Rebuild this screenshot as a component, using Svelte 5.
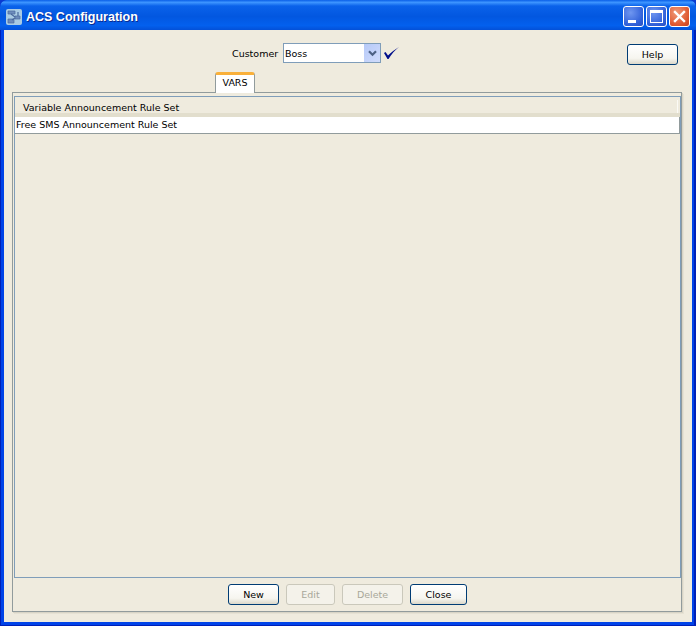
<script>
  const footerButtons = [
    { label: 'New', width: 51, disabled: false },
    { label: 'Edit', width: 49, disabled: true },
    { label: 'Delete', width: 61, disabled: true },
    { label: 'Close', width: 57, disabled: false }
  ];
</script>

<div class="window">
  <header class="titlebar">
    <svg class="appicon" width="16" height="16" viewBox="0 0 16 16">
      <rect x="0" y="0" width="16" height="16" rx="2" fill="#a9cbe4"/>
      <path d="M2 2h7v3H2zM9 7h5v3H9zM2 10h6v4H2z" fill="#6d8cbc" stroke="#4a6a9e" stroke-width="0.7"/>
      <path d="M5 5l4 3M9 9l-3 2M12 3v4" stroke="#4a6a9e" stroke-width="1.2" fill="none"/>
    </svg>
    <span class="title">ACS Configuration</span>
    <div class="wincontrols">
      <span class="wbtn"><i class="min"></i></span>
      <span class="wbtn"><i class="max"></i></span>
      <span class="wbtn close">
        <svg width="13" height="13" viewBox="0 0 13 13"><path d="M2 2l9 9M11 2l-9 9" stroke="#fff" stroke-width="2.4" stroke-linecap="square"/></svg>
      </span>
    </div>
  </header>

  <main class="client">
    <div class="toprow">
      <label class="customer">
        <span class="customerlabel">Customer</span>
        <span class="combo">
          <span class="comboval">Boss</span>
          <span class="comboarrow">
            <svg width="9" height="7" viewBox="0 0 9 7"><path d="M1 1.200l3.500 3.500L8 1.200" fill="none" stroke="#4d6185" stroke-width="2.200"/></svg>
          </span>
        </span>
        <svg class="tick" width="15" height="12" viewBox="0 0 15 12"><path d="M0 6L1.500 5L4 8.500C7 5.500 11 2.500 15 0C11 3 7.500 7 4.500 12H3.500z" fill="#000e8a"/></svg>
      </label>
      <button class="btn help">Help</button>
    </div>

    <div class="tabstrip">
      <div class="tab">VARS</div>
    </div>

    <section class="pane">
      <div class="content">
        <div class="tablehead"><span class="headcell">Variable Announcement Rule Set</span></div>
        <div class="row">Free SMS Announcement Rule Set</div>
      </div>
      <footer class="actions">
        {#each footerButtons as b}
          <button class="btn" disabled={b.disabled} style="width:{b.width}px">{b.label}</button>
        {/each}
      </footer>
    </section>
  </main>
</div>

<style>
  :global(body) {
    margin: 0;
    background: #0a3ad0;
  }
  .window {
    width: 696px;
    height: 626px;
    box-sizing: border-box;
    display: flex;
    flex-direction: column;
    background: #0043e8;
    box-shadow: inset 1px 0 #0020b8, inset -2px 0 #0020b8, inset 0 -1px #0020b8;
    border-radius: 7px 7px 0 0;
    overflow: hidden;
    font-family: "DejaVu Sans", sans-serif;
    font-size: 9.5px;
    color: #000;
  }
  .titlebar {
    height: 30px;
    flex: none;
    display: flex;
    align-items: center;
    padding: 3px 3px 0 6px;
    box-sizing: border-box;
    background: linear-gradient(180deg, #0a5fe8 0%, #3d95ff 8%, #0a62ea 20%, #0257e0 55%, #0360ee 85%, #0350d8 100%);
  }
  .title {
    margin-left: 4px;
    color: #fff;
    font-family: "Liberation Sans", sans-serif;
    font-weight: 700;
    font-size: 12.5px;
    text-shadow: 1px 1px 0 #0a2a90;
  }
  .wincontrols {
    margin-left: auto;
    display: flex;
    gap: 2px;
    padding-right: 3px;
  }
  .wbtn {
    width: 21px;
    height: 21px;
    box-sizing: border-box;
    border: 1px solid #fff;
    border-radius: 3px;
    background: radial-gradient(circle at 35% 30%, #6f96f0, #2f5fd8 70%, #2a50c0);
    position: relative;
    display: flex;
    align-items: center;
    justify-content: center;
  }
  .wbtn.close {
    background: radial-gradient(circle at 35% 30%, #f09a78, #df5a32 65%, #c8401e);
  }
  .min {
    position: absolute;
    left: 4px;
    bottom: 3px;
    width: 8px;
    height: 3px;
    background: #fff;
  }
  .max {
    width: 13px;
    height: 13px;
    box-sizing: border-box;
    border: 1px solid #fff;
    border-top-width: 3px;
  }
  .client {
    flex: 1;
    margin: 0 4px 4px;
    padding: 0 10px 10px 8px;
    background: #efebde;
    display: flex;
    flex-direction: column;
    min-height: 0;
  }
  .toprow {
    height: 42px;
    flex: none;
    position: relative;
    display: flex;
    align-items: flex-start;
    justify-content: flex-end;
  }
  .customer {
    position: absolute;
    left: 220px;
    top: 13px;
    display: flex;
    align-items: center;
    height: 20px;
  }
  .customerlabel {
    width: 45px;
    white-space: nowrap;
  }
  .combo {
    margin-left: 6px;
    width: 98px;
    height: 20px;
    box-sizing: border-box;
    border: 1px solid #7f9db9;
    background: #fff;
    display: flex;
    align-items: center;
    justify-content: space-between;
  }
  .comboval {
    padding-left: 1px;
  }
  .comboarrow {
    width: 16px;
    height: 18px;
    background: linear-gradient(135deg, #b6c9f8, #d0dcfc);
    display: flex;
    align-items: center;
    justify-content: center;
  }
  .tick {
    margin-left: 3px;
  }
  .btn {
    font: inherit;
    color: #000;
    height: 21px;
    padding: 0;
    box-sizing: border-box;
    border: 1px solid #003c74;
    border-radius: 3px;
    background: linear-gradient(180deg, #ffffff 0%, #f6f5ef 70%, #dcd8ca 100%);
  }
  .btn:disabled {
    color: #a8a799;
    border-color: #cac8bb;
    background: #f4f2ea;
  }
  .help {
    width: 51px;
    margin-top: 14px;
    margin-right: 4px;
  }
  .tabstrip {
    height: 20px;
    flex: none;
    position: relative;
    display: flex;
    align-items: flex-end;
    padding-left: 203px;
  }
  .tab {
    width: 40px;
    height: 21px;
    box-sizing: border-box;
    margin-bottom: -1px;
    background: #fff;
    border: 1px solid #919b9c;
    border-bottom: 0;
    border-top: 3px solid #f9b03a;
    border-radius: 3px 3px 0 0;
    text-align: center;
    line-height: 15px;
    position: relative;
    z-index: 1;
  }
  .pane {
    flex: 1;
    min-height: 0;
    box-sizing: border-box;
    border: 1px solid #919b9c;
    box-shadow: 1px 1px 0 #d8d4c6, 2px 2px 0 #e6e2d4;
    padding: 3px 0 0 1px;
    display: flex;
    flex-direction: column;
  }
  .content {
    flex: 1;
    min-height: 0;
    border: 1px solid #7f9db9;
  }
  .tablehead {
    height: 20px;
    box-sizing: border-box;
    padding: 3px 2px 0 8px;
    display: flex;
    border-bottom: 4px solid #e2decd;
  }
  .headcell {
    flex: 1;
    height: 13px;
    line-height: 15px;
    border-right: 1px solid #fbfaf5;
  }
  .row {
    height: 17px;
    box-sizing: border-box;
    background: #fff;
    border-bottom: 1px solid #919b9c;
    border-right: 1px solid #919b9c;
    padding-left: 1px;
    line-height: 16px;
  }
  .actions {
    height: 33px;
    flex: none;
    display: flex;
    justify-content: center;
    align-items: flex-start;
    gap: 7px;
    padding-top: 6px;
    box-sizing: border-box;
  }
</style>
